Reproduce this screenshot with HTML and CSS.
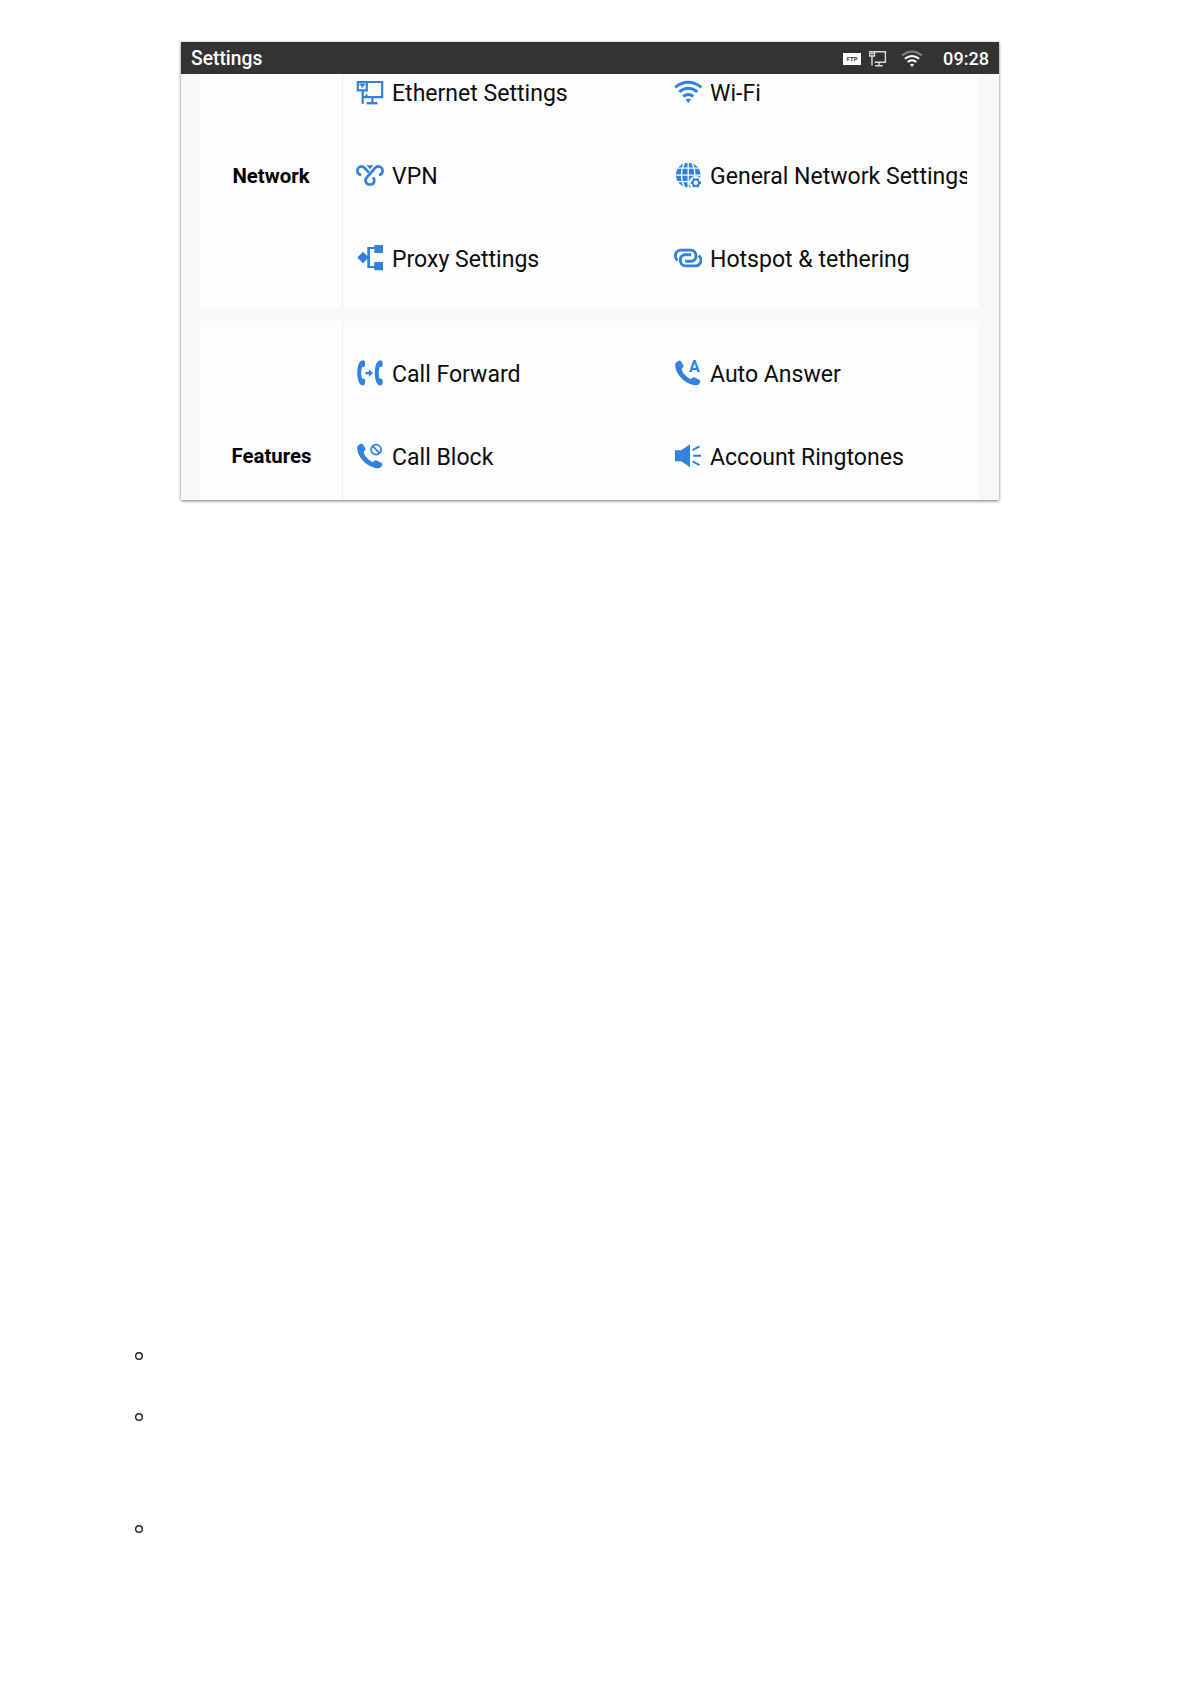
FILE: index.html
```html
<!DOCTYPE html>
<html lang="en">
<head>
<meta charset="utf-8">
<title>Settings</title>
<link rel="stylesheet" href="styles.css">
</head>
<body>
<svg class="defs" width="0" height="0" aria-hidden="true">
  <symbol id="handset" viewBox="0 0 28 28">
    <path fill="currentColor" d="M2 3.5 4.8 1.8Q6.2 1.2 7 2.5L9.4 6.2Q10 7.5 8.9 8.5L7.6 9.7Q8.5 15.5 16.6 20.2L18.4 18.8Q19.3 18 20.6 18.5L25.4 20.8Q26.7 21.5 26.2 22.9L24.9 25.3Q23 26.8 19.3 26C9 23.4 1.2 14 1.2 6.2Q1.2 4.3 2 3.5Z"/>
  </symbol>
</svg>
<main class="page">
  <section class="device">
    <header class="statusbar">
      <h1 class="title">Settings</h1>
      <div class="status">
        <span class="ftp">FTP</span>
        <svg class="status-lan" viewBox="0 0 18 16" fill="none" stroke="currentColor" stroke-width="1.4"><path d="M.8.8H5.5V5H.8ZM2 2.6H4.4M3 5V14.6M5.5.8H16.4V11.3H5.6M10 11.3V14.5M6.2 14.7H13.7"/></svg>
        <svg class="status-wifi" viewBox="0 0 22 18" fill="none" stroke="currentColor" stroke-width="1.9"><path opacity=".4" d="M1 5.6Q11-2.6 21 5.6"/><path d="M3.8 8.8Q11 3 18.2 8.8M6.7 12Q11 8.4 15.3 12"/><path fill="currentColor" stroke="none" d="M9 14.4Q11 13 13 14.4L11 17Z"/></svg>
        <time class="clock">09:28</time>
      </div>
    </header>
    <div class="scroll">
      <section class="card">
        <h2 class="category">Network</h2>
        <div class="grid">
          <div class="item"><svg class="icon" viewBox="0 0 28 28" fill="none" stroke="currentColor" stroke-width="2.2"><path d="M1.8 4H10.8V12.4H1.8ZM3.4 6.5H9.2M6.3 6.5V9.6M6.7 12.4V25.8M10.8 4H26.2V19.2H10.5V16.5M6.7 19.2H10.5M16.4 19.2V25"/><path stroke-width="2.4" d="M10.7 25.2H21.5"/></svg><span class="label">Ethernet Settings</span></div>
          <div class="item"><svg class="icon" viewBox="0 0 28 28" fill="none" stroke="currentColor" stroke-width="2.7" stroke-linejoin="round"><path d="M5.3 14C2.6 13.6 1.4 11.8 1.4 9.8C1.4 7.3 3.2 5.4 5.6 5.4C9 5.4 9.8 8.8 13 11.6"/><path d="M22.9 14C25.4 13.6 26.6 11.8 26.6 9.8C26.6 7.3 24.8 5.4 22.4 5.4C18 5.4 16.5 11.5 11.8 15.2C7.6 18.8 9.8 23.5 14 23.5C18 23.5 19.6 19.6 17 16.4"/><path fill="currentColor" stroke="none" d="M10.7 4.3H17.3L14 8.4Z"/></svg><span class="label">VPN</span></div>
          <div class="item"><svg class="icon" viewBox="0 0 28 28" fill="currentColor"><path d="M1.2 13.6 7 7.8 11.3 12.1V3H18.3V.9H27V9.1H18.3V5.1H14V21.9H18.3V18H27V26.2H18.3V24.1H11.3V15L7 19.3Z"/></svg><span class="label">Proxy Settings</span></div>
        </div>
        <div class="grid">
          <div class="item"><svg class="icon" viewBox="0 0 28 28" fill="none" stroke="currentColor" stroke-width="2.9"><path d="M1.2 9.3Q14.3-.7 27.4 9.3M5.2 13.8Q14.3 6.8 23.4 13.8M9.2 18.4Q14.3 14.4 19.4 18.4"/><path fill="currentColor" stroke="none" d="M11.5 21.6Q14.3 19.8 17.1 21.6L14.3 24.9Z"/></svg><span class="label">Wi-Fi</span></div>
          <div class="item"><svg class="icon" viewBox="0 0 28 28"><circle cx="14.2" cy="14" r="12.3" fill="currentColor"/><g fill="none" stroke="#fdfdfd" stroke-width="1.3"><path d="M14.2 1V27M10.4 2C6.5 9 6.5 19 10.4 26M18 2C21.9 9 21.9 19 18 26M3.8 7.1H24.6M1 14.1H27M3 20.6H25"/></g><circle cx="21.8" cy="21.8" r="6.8" fill="#fdfdfd"/><g fill="none" stroke="currentColor"><circle cx="21.8" cy="21.8" r="3.3" stroke-width="2"/><path stroke-width="2" d="M25.6 21.8H27M23.7 25.1 24.4 26.3M19.9 25.1 19.2 26.3M18 21.8H16.6M19.9 18.5 19.2 17.3M23.7 18.5 24.4 17.3"/></g></svg><span class="label">General Network Settings</span></div>
          <div class="item"><svg class="icon" viewBox="0 0 28 28" fill="none" stroke="currentColor" stroke-width="2.9"><path d="M3.6 16.4C1 14.4.8 10.8 2.4 8.4Q3.9 6.1 6.6 6.1H17C22.9 6.1 24 16 18 17.2H11.2"/><path d="M24.7 11.6C27.3 13.6 27.5 17.2 25.9 19.6Q24.4 21.9 21.7 21.9H11.3C5.4 21.9 4.3 12 10.3 10.8H17.1"/></svg><span class="label">Hotspot &amp; tethering</span></div>
        </div>
      </section>
      <section class="card">
        <h2 class="category">Features</h2>
        <div class="grid">
          <div class="item"><svg class="icon" viewBox="0 0 28 28" fill="currentColor"><path d="M7.2 1.3Q8.8 1.4 9 3L9.2 6.1Q9 8 7.1 8L5.9 8.2Q4.2 14 5.9 19.4L7.1 19.6Q9 19.8 9.2 21.6L9 24.6Q8.7 26.3 7.1 26.4Q4.3 26.3 3 23.4C.7 18 .7 9.6 3 4.3Q4.3 1.4 7.2 1.3Z"/><path d="M24.7 1.3Q26.3 1.4 26.5 3L26.7 6.1Q26.5 8 24.6 8L23.4 8.2Q21.7 14 23.4 19.4L24.6 19.6Q26.5 19.8 26.7 21.6L26.5 24.6Q26.2 26.3 24.6 26.4Q21.8 26.3 20.5 23.4C18.2 18 18.2 9.6 20.5 4.3Q21.8 1.4 24.7 1.3Z"/><path d="M9.5 12.9H12.8V10.5L17.2 14.1 12.8 17.7V15.3H9.5Z"/></svg><span class="label">Call Forward</span></div>
          <div class="item"><svg class="icon" viewBox="0 0 28 28"><use href="#handset"/><g fill="none" stroke="currentColor" stroke-width="1.8"><circle cx="20.1" cy="7.6" r="5"/><path d="M16.6 4.1 23.6 11.1"/></g></svg><span class="label">Call Block</span></div>
        </div>
        <div class="grid">
          <div class="item"><svg class="icon" viewBox="0 0 28 28"><use href="#handset"/><text class="auto-letter" x="20.4" y="13.4" text-anchor="middle">A</text></svg><span class="label">Auto Answer</span></div>
          <div class="item"><svg class="icon" viewBox="0 0 28 28" fill="currentColor"><path d="M1 8.2H7.2L16 2.2V25.2L7.2 19.2H1Z"/><path fill="none" stroke="currentColor" stroke-width="1.9" d="M18.6 8.2 25.5 4.4M19.2 13.8H27M18.6 19.3 25.5 23.2"/></svg><span class="label">Account Ringtones</span></div>
        </div>
      </section>
    </div>
  </section>
  <ul class="notes">
    <li class="note"></li>
    <li class="note note-tall"></li>
    <li class="note"></li>
  </ul>
</main>
</body>
</html>
```
FILE: styles.css
```css
* { box-sizing: border-box; }
body { margin: 0; background: #fff; font-family: Roboto, sans-serif; color: #0c0c0c; }
.defs { display: block; }
.page { height: 1684px; padding: 42px 0 0 181px; overflow: hidden; }
.device { width: 818px; height: 458px; overflow: hidden; background: #f8f8f8; display: flex; flex-direction: column; box-shadow: 0 1px 3px rgba(0, 0, 0, .55); }
.statusbar { flex: none; height: 32px; background: #333; color: #fff; display: flex; align-items: center; justify-content: space-between; padding: 2px 10px 0 10px; }
.title { margin: 0; font-size: 19.3px; font-weight: 500; line-height: 30px; }
.status { display: flex; align-items: center; }
.ftp { width: 18px; height: 12px; background: #fff; color: #333; font-size: 6px; font-weight: 700; line-height: 12px; text-align: center; }
.status-lan { width: 18px; height: 16px; margin-left: 8px; color: #ddd; }
.status-wifi { width: 22px; height: 18px; margin-left: 14px; }
.clock { margin-left: 20px; font-size: 18.1px; font-weight: 500; line-height: 30px; }
.scroll { flex: 1; min-height: 0; overflow: hidden; padding: 0 20px 0 19px; }
.card { height: 266px; display: flex; padding: 8px 0 9px; background: #fdfdfd; }
.card:first-child { margin-top: -32px; }
.card + .card { margin-top: 13px; padding: 10px 0 7px; }
.category { width: 143px; margin: -8px 0 -9px; padding-top: 1px; border-right: 1px solid #eee; display: flex; align-items: center; justify-content: center; font-size: 20.4px; font-weight: 700; color: #000; }
.card + .card .category { margin: -10px 0 -7px; padding: 4px 0 0 1px; }
.grid { width: 318px; padding-left: 13px; }
.item { height: 83px; display: flex; align-items: center; gap: 8px; }
.icon { flex: none; width: 28px; height: 28px; color: #3182dc; }
.auto-letter { font: 700 16px Roboto, sans-serif; fill: currentColor; }
.label { width: 257px; overflow: hidden; white-space: nowrap; font-size: 23.05px; line-height: 32px; padding-top: 5px; }
.notes { list-style: none; margin: 852px 0 0 -46px; padding: 0; }
.note { height: 61px; }
.note-tall { height: 112px; }
.note::before { content: ""; display: block; width: 8px; height: 8px; border-radius: 50%; box-shadow: inset 0 0 0 1.4px #222; }
```
